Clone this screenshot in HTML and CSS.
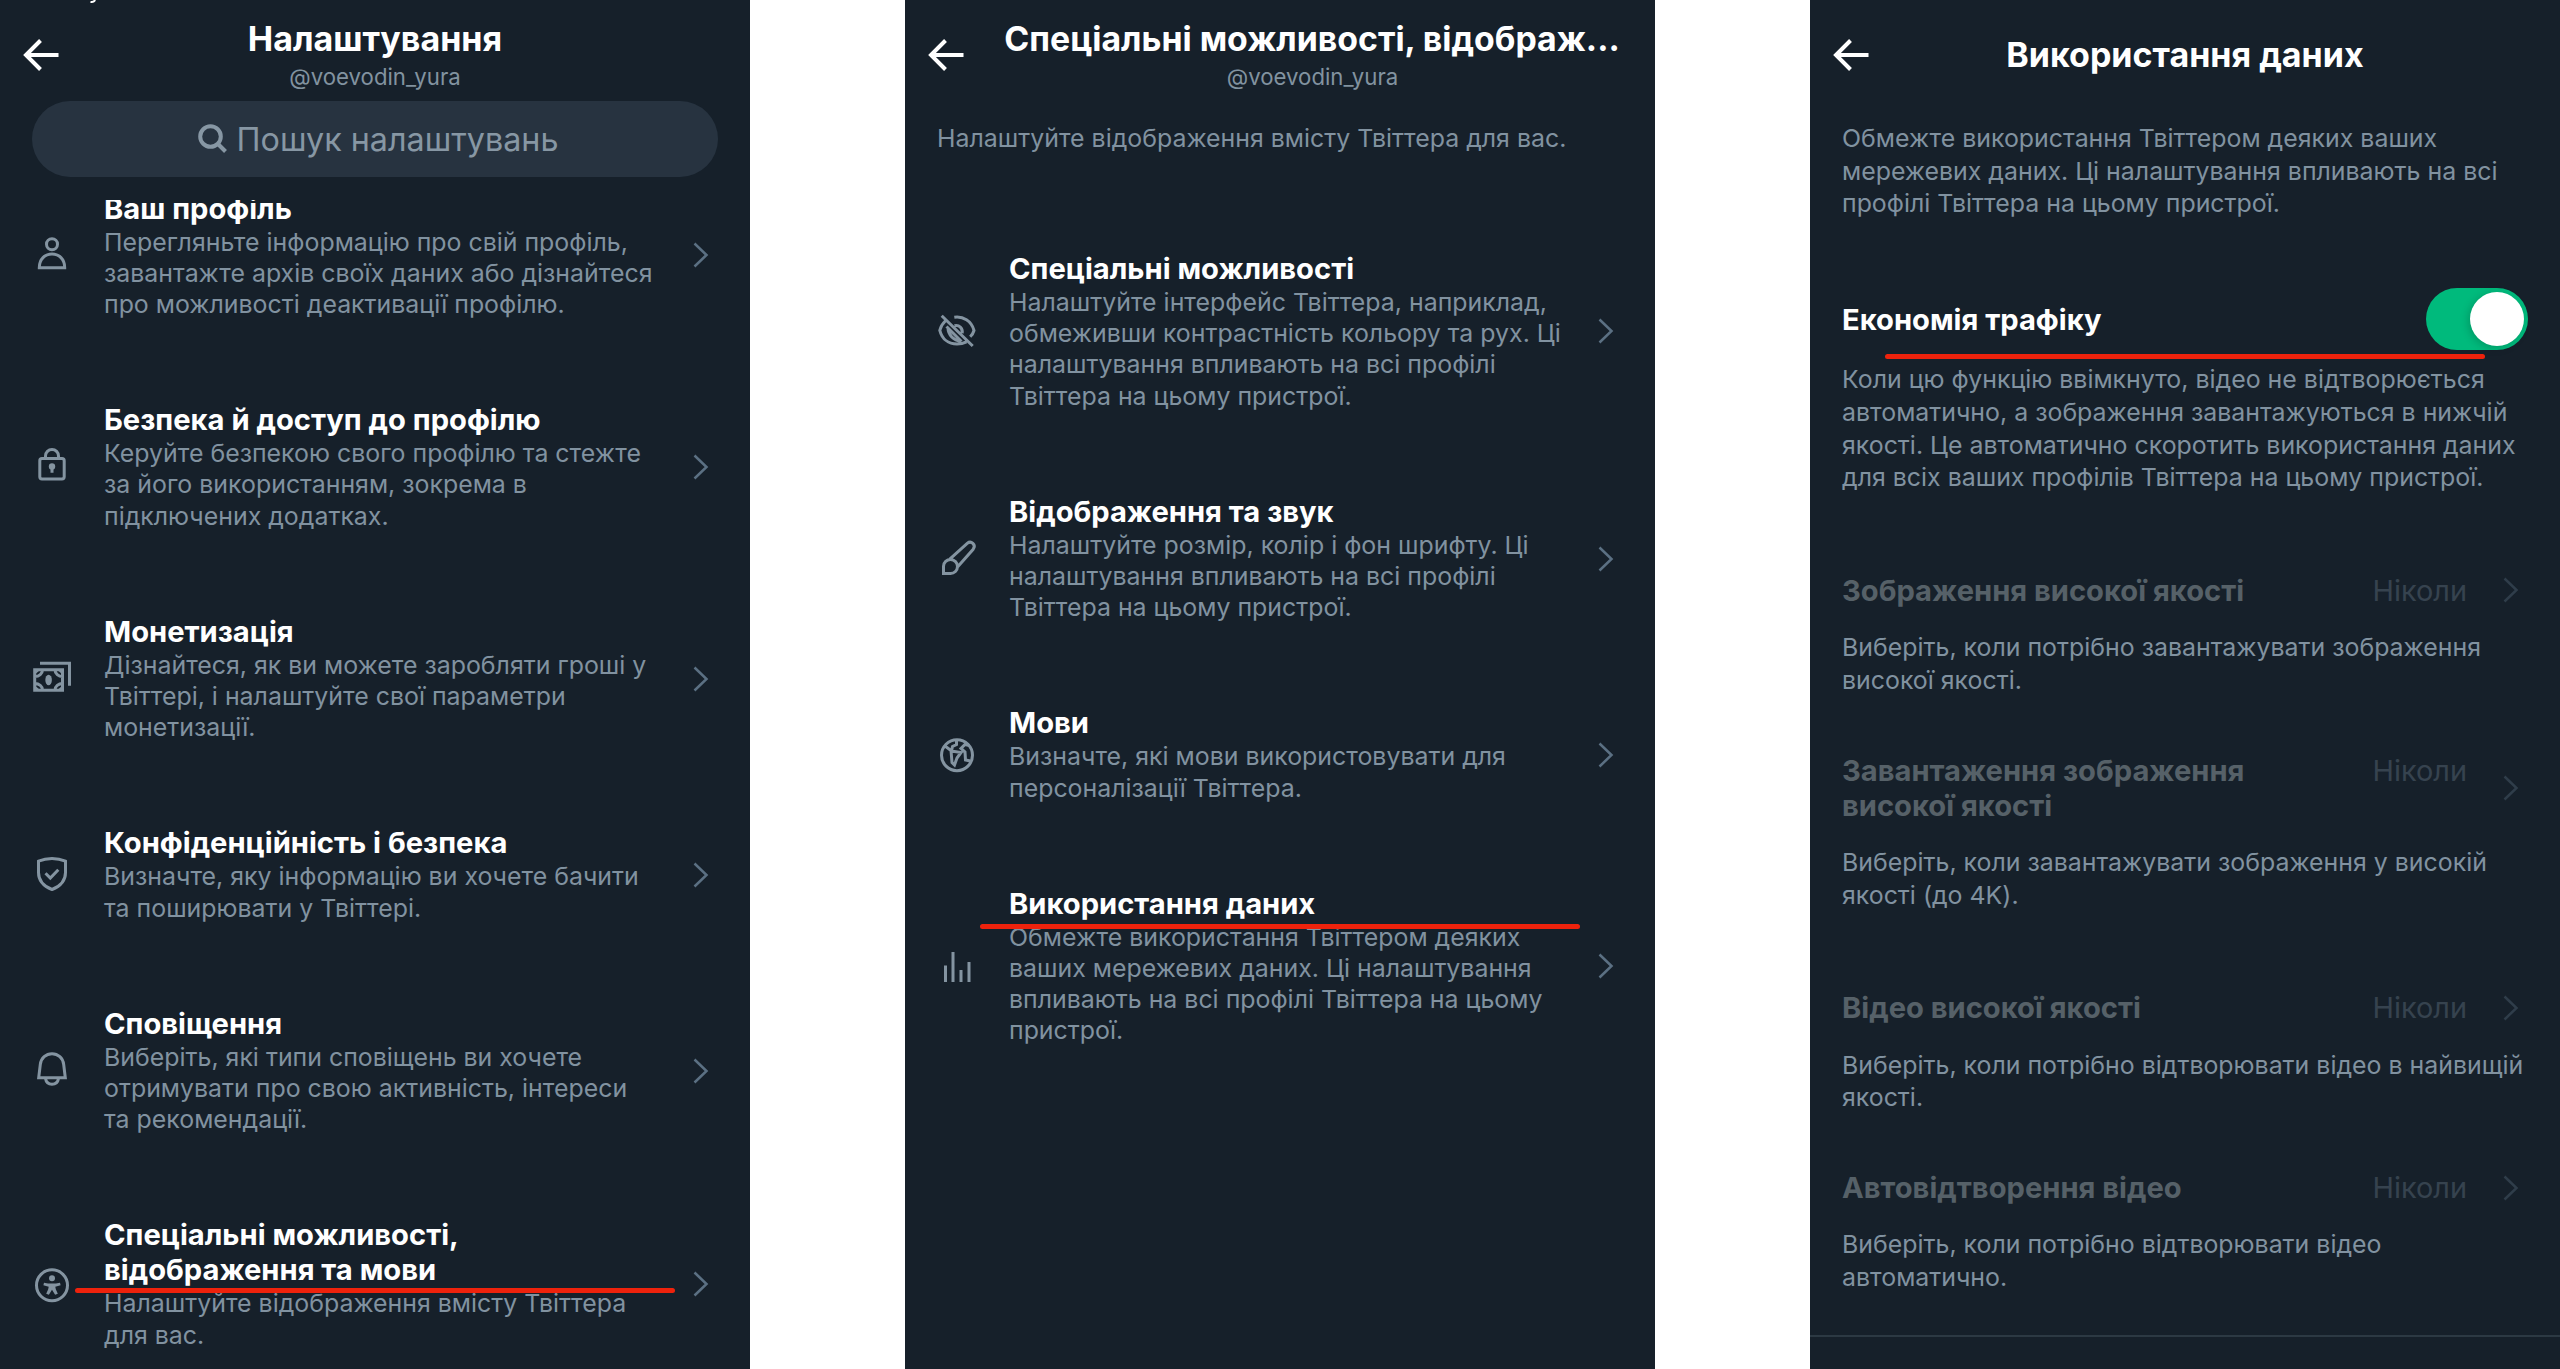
FILE: index.html
```html
<!DOCTYPE html>
<html lang="uk">
<head>
<meta charset="utf-8">
<title>Налаштування</title>
<link rel="stylesheet" href="styles.css">
</head>
<body>
<svg class="defs" width="0" height="0" aria-hidden="true">
  <symbol id="back" viewBox="0 0 40 36"><path d="M19.500 3.500 5 18l14.500 14.500M5 18h32.500"/></symbol>
  <symbol id="chevron" viewBox="0 0 18 28"><path d="M2.500 2.500 14.500 14 2.500 25.500"/></symbol>
</svg>
<main class="screens">

  <section class="screen">
    <header class="header header-search">
      <svg class="clipped-tail" viewBox="0 0 8 4"><path d="M6 0Q5 2.500 1.500 2"/></svg>
      <svg class="back"><use href="#back"/></svg>
      <h1 class="heading">Налаштування</h1>
      <p class="handle">@voevodin_yura</p>
      <div class="search">
        <svg class="search-icon" viewBox="0 0 30 30"><circle cx="12.500" cy="12.500" r="10.300"/><path d="m20 20 7.500 7.500"/></svg>
        <span>Пошук налаштувань</span>
      </div>
    </header>
    <ul class="list list-scrolled">
      <li class="item">
        <svg class="icon" viewBox="0 0 48 48"><circle cx="24" cy="12.300" r="5.500"/><path d="M11.300 35.700C11.300 27 17 22 24 22s12.700 5 12.700 13.700z"/></svg>
        <div class="text"><h2>Ваш профіль</h2><p>Перегляньте інформацію про свій профіль,<br>завантажте архів своїх даних або дізнайтеся<br>про можливості деактивації профілю.</p></div>
        <svg class="chevron"><use href="#chevron"/></svg>
      </li>
      <li class="item">
        <svg class="icon" viewBox="0 0 48 48"><rect x="11.800" y="15.500" width="24.400" height="20.500" rx="2.200"/><path d="M17.500 15V13a6.500 6.500 0 0 1 13 0v2M24 25v4.700"/><circle class="solid" cx="24" cy="23.500" r="3.200"/></svg>
        <div class="text"><h2>Безпека й доступ до профілю</h2><p>Керуйте безпекою свого профілю та стежте<br>за його використанням, зокрема в<br>підключених додатках.</p></div>
        <svg class="chevron"><use href="#chevron"/></svg>
      </li>
      <li class="item">
        <svg class="icon" viewBox="0 0 48 48"><path d="M12 8.200h29.500v22.500M6.700 14.800h27.800v20.500H6.700zM14.500 15c0 3.500-3.500 6.500-7.500 6.500M27 15c0 3.500 3.500 6.500 7.500 6.500M14.500 35c0-3.500-3.500-6.500-7.500-6.500M27 35c0-3.500 3.500-6.500 7.500-6.500"/><path class="solid" d="M7 15h5L7 19.500zM34.500 15h-5l5 4.500zM7 35h5l-5-4.500zM34.500 35h-5l5-4.500z"/><ellipse class="solid" cx="20.600" cy="25" rx="3.300" ry="5.200"/></svg>
        <div class="text"><h2>Монетизація</h2><p>Дізнайтеся, як ви можете заробляти гроші у<br>Твіттері, і налаштуйте свої параметри<br>монетизації.</p></div>
        <svg class="chevron"><use href="#chevron"/></svg>
      </li>
      <li class="item">
        <svg class="icon" viewBox="0 0 48 48"><path d="M24 7.500c5 0 9.500 1 13.500 2.700v11.300c0 8-4.500 13.500-13.500 17-9-3.500-13.500-9-13.500-17V10.200C14.500 8.500 19 7.500 24 7.500z"/><path d="m17.500 22.300 4.800 4.800 8-8.300"/></svg>
        <div class="text"><h2>Конфіденційність і безпека</h2><p>Визначте, яку інформацію ви хочете бачити<br>та поширювати у Твіттері.</p></div>
        <svg class="chevron"><use href="#chevron"/></svg>
      </li>
      <li class="item">
        <svg class="icon" viewBox="0 0 48 48"><path d="M10.700 30.700 12.300 17.500C13 11 18 6.700 24 6.700S35 11 35.700 17.500l1.600 13.200zM17.500 31.500c.6 3.800 3.300 5.700 6.500 5.700s5.900-1.900 6.500-5.700"/></svg>
        <div class="text"><h2>Сповіщення</h2><p>Виберіть, які типи сповіщень ви хочете<br>отримувати про свою активність, інтереси<br>та рекомендації.</p></div>
        <svg class="chevron"><use href="#chevron"/></svg>
      </li>
      <li class="item item-marked">
        <svg class="icon" viewBox="0 0 48 48"><circle cx="24" cy="24.300" r="15.500"/><circle class="solid" cx="24" cy="17.300" r="3"/><path class="solid" d="M16 21.700c5.500 1.200 10.500 1.200 16 0l.6 2.600-5.300 1.500.5 2.500 2 4.500-2.700 1-3.100-5-3.100 5-2.700-1 2-4.500.5-2.500-5.300-1.500z"/></svg>
        <div class="text"><h2>Спеціальні можливості,<br>відображення та мови</h2><p>Налаштуйте відображення вмісту Твіттера<br>для вас.</p></div>
        <svg class="chevron"><use href="#chevron"/></svg>
        <i class="marker"></i>
      </li>
    </ul>
  </section>

  <section class="screen">
    <header class="header">
      <svg class="back"><use href="#back"/></svg>
      <h1 class="heading heading-long">Спеціальні можливості, відображ...</h1>
      <p class="handle handle-long">@voevodin_yura</p>
    </header>
    <p class="note intro">Налаштуйте відображення вмісту Твіттера для вас.</p>
    <ul class="list list-after-intro">
      <li class="item">
        <svg class="icon" viewBox="0 0 48 48"><path d="m8.700 7.800 31 30.200M12.300 13C9.500 15.700 7.600 19 6.800 22.300 9 31 15.500 36 24 36c3.500 0 6.500-.7 9.500-2.200M21.300 9.300C30 8 38.500 13 41 22.500c-.7 2.500-2 4.500-3.800 6.300M21.500 17.700c4.500-1.200 8.500 2.300 7.700 7.500M15 20c.2 7 5.500 12.500 13 13.500M13.500 18.500l15 15"/></svg>
        <div class="text"><h2>Спеціальні можливості</h2><p>Налаштуйте інтерфейс Твіттера, наприклад,<br>обмеживши контрастність кольору та рух. Ці<br>налаштування впливають на всі профілі<br>Твіттера на цьому пристрої.</p></div>
        <svg class="chevron"><use href="#chevron"/></svg>
      </li>
      <li class="item">
        <svg class="icon" viewBox="0 0 48 48"><path d="M10.500 38.500v-7.200a7 7 0 1 1 7 7.200zM16.500 24.300 34.500 8.200c3.500-2.800 9 1.500 5.700 6L24.500 32"/></svg>
        <div class="text"><h2>Відображення та звук</h2><p>Налаштуйте розмір, колір і фон шрифту. Ці<br>налаштування впливають на всі профілі<br>Твіттера на цьому пристрої.</p></div>
        <svg class="chevron"><use href="#chevron"/></svg>
      </li>
      <li class="item">
        <svg class="icon" viewBox="0 0 48 48"><circle cx="24" cy="24.200" r="15.500"/><path d="m12 15 6 4.500 1 12 2.500 2.500 2.500-7 4-5.500-9.500-1.500 1-4.500 4-2V9.500M36.500 14.500l-4.500-1-4 4 4 3.500.5 8 5 1"/></svg>
        <div class="text"><h2>Мови</h2><p>Визначте, які мови використовувати для<br>персоналізації Твіттера.</p></div>
        <svg class="chevron"><use href="#chevron"/></svg>
      </li>
      <li class="item item-marked item-data">
        <svg class="icon" viewBox="0 0 48 48"><path d="M12.500 22.500V39M20 9v30M28 27v12M36 19v20"/></svg>
        <div class="text"><h2>Використання даних</h2><p>Обмежте використання Твіттером деяких<br>ваших мережевих даних. Ці налаштування<br>впливають на всі профілі Твіттера на цьому<br>пристрої.</p></div>
        <svg class="chevron"><use href="#chevron"/></svg>
        <i class="marker"></i>
      </li>
    </ul>
  </section>

  <section class="screen">
    <header class="header header-single">
      <svg class="back"><use href="#back"/></svg>
      <h1 class="heading">Використання даних</h1>
    </header>
    <p class="note intro">Обмежте використання Твіттером деяких ваших<br>мережевих даних. Ці налаштування впливають на всі<br>профілі Твіттера на цьому пристрої.</p>
    <div class="saver">
      <h2>Економія трафіку</h2>
      <span class="toggle"><span class="knob"></span></span>
      <i class="marker"></i>
    </div>
    <p class="note saver-note">Коли цю функцію ввімкнуто, відео не відтворюється<br>автоматично, а зображення завантажуються в нижчій<br>якості. Це автоматично скоротить використання даних<br>для всіх ваших профілів Твіттера на цьому пристрої.</p>
    <div class="group">
      <div class="option">
        <div class="option-row"><h2>Зображення високої якості</h2><span class="value">Ніколи</span><svg class="chevron"><use href="#chevron"/></svg></div>
        <p class="note">Виберіть, коли потрібно завантажувати зображення<br>високої якості.</p>
      </div>
      <div class="option">
        <div class="option-row"><h2>Завантаження зображення<br>високої якості</h2><span class="value">Ніколи</span><svg class="chevron"><use href="#chevron"/></svg></div>
        <p class="note">Виберіть, коли завантажувати зображення у високій<br>якості (до 4K).</p>
      </div>
    </div>
    <div class="group">
      <div class="option">
        <div class="option-row"><h2>Відео високої якості</h2><span class="value">Ніколи</span><svg class="chevron"><use href="#chevron"/></svg></div>
        <p class="note">Виберіть, коли потрібно відтворювати відео в найвищій<br>якості.</p>
      </div>
      <div class="option">
        <div class="option-row"><h2>Автовідтворення відео</h2><span class="value">Ніколи</span><svg class="chevron"><use href="#chevron"/></svg></div>
        <p class="note">Виберіть, коли потрібно відтворювати відео<br>автоматично.</p>
      </div>
    </div>
    <hr class="divider">
  </section>

</main>
</body>
</html>
```
FILE: styles.css
```css
* { box-sizing: border-box; }

body {
  margin: 0;
  background: #fff;
  color: #fff;
  font-family: Inter, "Noto Sans", sans-serif;
  white-space: nowrap;
}

h1, h2, p, ul { margin: 0; padding: 0; }
svg { display: block; fill: none; stroke: currentColor; }
.defs { position: absolute; }

.screens {
  display: flex;
  justify-content: space-between;
  height: 1369px;
  overflow: hidden;
}

.screen {
  width: 750px;
  height: 1369px;
  overflow: hidden;
  background: #16202a;
}

/* Header */
.header {
  position: relative;
  z-index: 1;
  height: 122px;
  padding-top: 18px;
  background: #16202a;
  text-align: center;
}
.header-search { height: 200px; }
.header-single { padding-top: 34px; }

.back {
  position: absolute;
  left: 21px;
  top: 37px;
  width: 40px;
  height: 36px;
  stroke-width: 4;
}
.clipped-tail {
  position: absolute;
  left: 89px;
  top: 0;
  width: 8px;
  height: 4px;
  stroke-width: 2;
}

.heading {
  font-size: 34px;
  line-height: 42px;
  font-weight: 700;
}
.heading-long {
  padding-left: 64px;
  font-size: 33.8px;
}
.handle {
  margin-top: 3px;
  color: #8293a0;
  font-size: 22.2px;
  line-height: 27px;
}
.handle-long { padding-left: 65px; }

.search {
  display: flex;
  align-items: center;
  justify-content: center;
  gap: 9px;
  height: 76px;
  margin: 11px 32px 0;
  padding-left: 6px;
  border-radius: 38px;
  background: #273340;
  color: #8797a4;
  font-size: 32.3px;
}
.search-icon { width: 30px; height: 30px; stroke-width: 4; }

/* Setting links */
.list { list-style: none; }
.list-scrolled { margin-top: -51px; }
.list-after-intro { margin-top: 54.800px; }

.item {
  position: relative;
  display: flex;
  align-items: center;
  padding: 41.500px 40px 40.500px 28px;
}
.icon {
  flex: none;
  width: 48px;
  height: 48px;
  margin: 1px 28px 0 0;
  color: #8494a1;
  stroke-width: 3;
}
.solid { fill: currentColor; stroke: none; }
.text { flex: 1; }

h2 {
  font-size: 29.15px;
  line-height: 35px;
  font-weight: 700;
}
.text p {
  margin-top: 1px;
  color: #8192a0;
  font-size: 24.9px;
  line-height: 31.2px;
}
.chevron {
  flex: none;
  width: 18px;
  height: 28px;
  color: #5b7083;
  stroke-width: 2.5;
}

/* Hand-drawn highlight lines laid over the screens */
.marker {
  position: absolute;
  left: 75px;
  top: 112.500px;
  width: 600px;
  height: 5px;
  border-radius: 3px;
  background: #ee220c;
}
.item-data .marker { top: 79.500px; }

/* Notes */
.note {
  padding-left: 32px;
  color: #8192a0;
  font-size: 24.9px;
  line-height: 32.7px;
}

/* Data saver */
.saver {
  position: relative;
  display: flex;
  align-items: center;
  justify-content: space-between;
  height: 62px;
  margin-top: 68px;
  padding: 0 32px;
}
.toggle {
  display: flex;
  justify-content: flex-end;
  width: 102px;
  height: 62px;
  padding: 4px;
  border-radius: 31px;
  background: #00ba7c;
}
.knob {
  width: 54px;
  height: 54px;
  border-radius: 50%;
  background: #fff;
  box-shadow: -2px 2px 8px rgba(0, 0, 0, .18);
}
.saver .marker { top: 66px; }
.saver-note { margin-top: 13px; }

/* Disabled options */
.group { margin-top: 79px; }
.option + .option { margin-top: 56px; }
.option-row {
  display: flex;
  align-items: center;
  padding: 0 40px 0 32px;
  margin-bottom: 23.3px;
}
.option-row h2 { flex: 1; color: #566168; }
.value {
  align-self: flex-start;
  margin-right: 35px;
  color: #36434f;
  font-size: 28.9px;
  line-height: 35px;
}
.option-row .chevron { color: #2f3d4a; }

.divider {
  height: 2px;
  margin: 41px 0 0;
  border: 0;
  background: #2c3943;
}
```
